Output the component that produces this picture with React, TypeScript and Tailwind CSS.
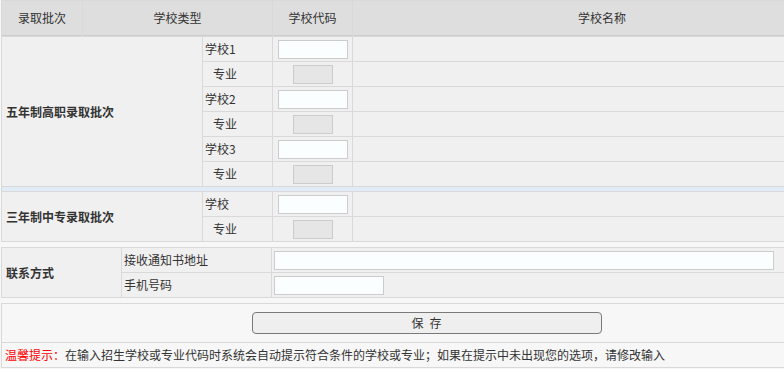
import React from 'react';

const font = { fontFamily: '"Noto Sans CJK SC", "Noto Sans", sans-serif' };

const cell = 'bg-[#f0f0f0] flex items-center';
const head = 'bg-[#dedede] border-b border-[#cccccc] flex items-center justify-center';

function CodeCell({ disabled }: { disabled?: boolean }) {
  return (
    <div className={`${cell} justify-center`}>
      {disabled ? (
        <input disabled className="w-[40px] h-[19px] border border-[#cccccc] bg-[#e6e6e6]" />
      ) : (
        <input className="w-[70px] h-[19px] border border-[#cccccc] bg-[#fbfeff] outline-none" />
      )}
    </div>
  );
}

function SchoolRows({ label }: { label: string }) {
  return (
    <>
      <div className={`${cell} pl-[2px]`}>{label}</div>
      <CodeCell />
      <div className={cell} />
      <div className={`${cell} pl-[10px]`}>专业</div>
      <CodeCell disabled />
      <div className={cell} />
    </>
  );
}

export default function App() {
  return (
    <div className="w-[784px] h-[369px] overflow-hidden bg-[#f7f7f7] text-[12px] text-[#333]" style={font}>
      <div className="w-[851px] ml-px">
        {/* main table */}
        <div className="grid grid-cols-[80px_119px_69px_79px_1fr] grid-rows-[35px_repeat(6,24px)_4px_repeat(2,24px)] gap-px p-px bg-[#d9d9d9]">
          <div className={head}>录取批次</div>
          <div className={`${head} col-span-2`}>学校类型</div>
          <div className={head}>学校代码</div>
          <div className={head}>学校名称</div>

          <div className={`${cell} col-span-2 row-span-6 pl-[4px] font-bold`}>五年制高职录取批次</div>
          <SchoolRows label="学校1" />
          <SchoolRows label="学校2" />
          <SchoolRows label="学校3" />

          <div className="col-span-5 bg-[#e2ecf6]" />

          <div className={`${cell} col-span-2 row-span-2 pl-[4px] font-bold`}>三年制中专录取批次</div>
          <SchoolRows label="学校" />
        </div>

        {/* contact */}
        <div className="mt-[5px] grid grid-cols-[119px_149px_1fr] grid-rows-[24px_24px] gap-px p-px bg-[#d9d9d9]">
          <div className={`${cell} row-span-2 pl-[4px] font-bold`}>联系方式</div>
          <div className={`${cell} pl-[2px]`}>接收通知书地址</div>
          <div className={`${cell} pl-[2px]`}>
            <input className="w-[500px] h-[19px] border border-[#cccccc] bg-[#fbfeff] outline-none" />
          </div>
          <div className={`${cell} pl-[2px]`}>手机号码</div>
          <div className={`${cell} pl-[2px]`}>
            <input className="w-[110px] h-[19px] border border-[#cccccc] bg-[#fbfeff] outline-none" />
          </div>
        </div>

        {/* save + tip */}
        <div className="mt-[5px] border border-[#d9d9d9] bg-[#f7f7f7]">
          <div className="h-[39px] flex items-center justify-center border-b border-[#d9d9d9]">
            <button className="w-[350px] h-[22px] rounded-[4px] border border-[#7a7a7a] bg-[#efefef] text-[12px] text-[#333] flex items-center justify-center gap-[6px]">
              <span>保</span>
              <span>存</span>
            </button>
          </div>
          <div className="h-[24px] flex items-center pl-[3px]">
            <span className="text-[#ff0000]">温馨提示：</span>
            <span>在输入招生学校或专业代码时系统会自动提示符合条件的学校或专业；如果在提示中未出现您的选项，请修改输入</span>
          </div>
        </div>
      </div>
    </div>
  );
}
